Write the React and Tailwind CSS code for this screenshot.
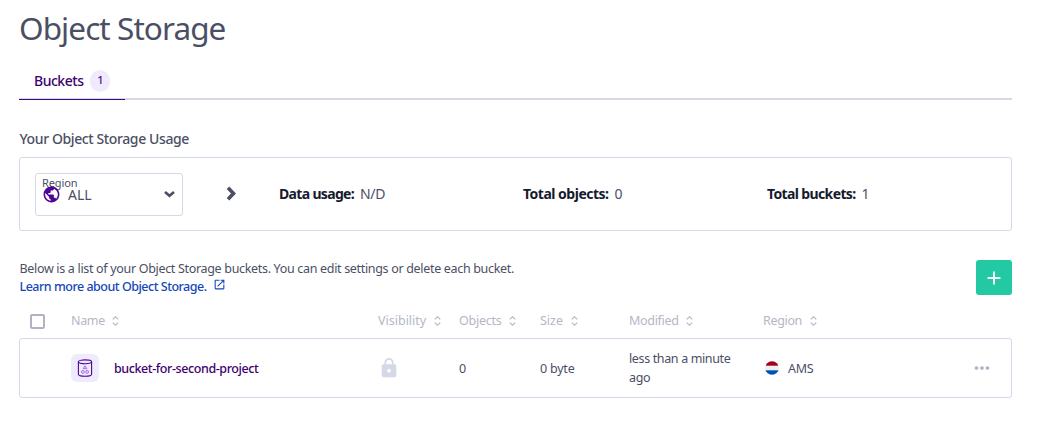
import React from "react";
import { MdAdd, MdLock, MdMoreHoriz, MdOpenInNew, MdPublic } from "react-icons/md";

const COLUMNS = "grid grid-cols-[52px_307px_81px_81px_89px_134px_1fr] items-center";

function SortIcon() {
  return (
    <svg width="7" height="10" viewBox="0 0 7 10" fill="none" stroke="currentColor" strokeWidth="1.1">
      <path d="M0.7 3.400 3.500 0.800 6.300 3.400M0.700 6.600 3.500 9.200 6.300 6.600" />
    </svg>
  );
}

function HeaderCell({ label, tracking }) {
  return (
    <div className="flex items-center gap-[7.5px]">
      <span className={tracking}>{label}</span>
      <SortIcon />
    </div>
  );
}

function Stat({ label, value, tracking }) {
  return (
    <div className="flex w-[244px] shrink-0 items-center gap-[6px] pb-0.5 text-[14px]">
      <span className={"font-bold text-[#151a2d] " + tracking}>{label}</span>
      <span className="tracking-[-0.300px]">{value}</span>
    </div>
  );
}

function BucketIcon() {
  return (
    <svg width="16" height="18" viewBox="0 0 16 18" fill="none">
      <g stroke="#4f0599" strokeWidth="1.1">
        <ellipse cx="8" cy="2.8" rx="6.6" ry="1.900" />
        <path d="M1.4 2.8v12.4c0 1.2 3 2 6.6 2s6.600-.8 6.600-2V2.800" />
      </g>
      <g stroke="#9a5ce6" strokeWidth="0.9">
        <path d="M8 6.800 9.800 9.700H6.200Z" />
        <circle cx="5.900" cy="12.900" r="1.400" />
        <circle cx="10.100" cy="12.900" r="1.400" />
      </g>
    </svg>
  );
}

function Flag() {
  return (
    <svg width="14" height="14" viewBox="0 0 14 14">
      <clipPath id="disc">
        <circle cx="7" cy="7" r="6.800" />
      </clipPath>
      <g clipPath="url(#disc)">
        <rect width="14" height="14" fill="#f0f0f0" />
        <rect width="14" height="4.700" fill="#a2001d" />
        <rect y="9.300" width="14" height="4.700" fill="#0052b4" />
      </g>
    </svg>
  );
}

export default function App() {
  return (
    <main className="h-[432px] w-[1052px] overflow-hidden bg-white pr-10 pl-[19px] font-['Noto_Sans',sans-serif] text-[12.5px] text-[#4b4f65]">
      <h1 className="pt-[8px] text-[31.5px] leading-[40px] tracking-[-0.930px]">Object Storage</h1>

      <nav className="mt-[14px] flex h-[38px] border-b-2 border-[#d4d8e7]">
        <div className="-mb-[2px] flex h-[38px] w-[106px] items-center gap-[7px] border-b border-[#40057f] pl-[15px]">
          <span className="text-[14px] font-medium tracking-[-0.480px] text-[#3d0071]">Buckets</span>
          <span className="flex h-[22px] w-5 items-center justify-center rounded-full bg-[#efebfd] text-[11px] font-medium text-[#4f0599]">
            1
          </span>
        </div>
      </nav>

      <h2 className="mt-[29px] pl-[0.5px] text-[14px] leading-5 font-medium tracking-[-0.390px]">Your Object Storage Usage</h2>

      <section className="mt-2 flex h-[74px] items-center rounded-[3px] border border-[#d4d8e7] pl-[15px]">
        <div className="flex h-[43px] w-[148px] shrink-0 flex-col rounded-[3px] border border-[#d4d8e7] pr-[7px] pl-[6px]">
          <span className="mt-[3px] h-[11px] text-[11px] leading-3 tracking-[-0.100px]">Region</span>
          <div className="flex h-[14px] items-center">
            <MdPublic className="shrink-0 text-[19px] text-[#4f0599]" />
            <span className="ml-[7px] text-[14px]">ALL</span>
            <svg className="ml-auto" width="11" height="7" viewBox="0 0 11 7" fill="none" stroke="currentColor" strokeWidth="2.600">
              <path d="M1 1 5.500 4.800 10 1" />
            </svg>
          </div>
        </div>
        <svg className="-mt-0.5 mr-[42px] ml-[43px] shrink-0" width="11" height="15" viewBox="0 0 11 15" fill="none" stroke="currentColor" strokeWidth="3.600">
          <path d="M2 1.700 7.500 7.500 2 13.300" />
        </svg>
        <Stat label="Data usage:" value="N/D" tracking="tracking-[-0.670px]" />
        <Stat label="Total objects:" value="0" tracking="tracking-[-0.500px]" />
        <Stat label="Total buckets:" value="1" tracking="tracking-[-0.630px]" />
      </section>

      <section className="mt-7 flex justify-between pl-[0.5px]">
        <div className="pt-px leading-[18px]">
          <p className="tracking-[-0.320px]">
            Below is a list of your Object Storage buckets. You can edit settings or delete each bucket.
          </p>
          <a className="flex font-medium text-[#1447b8]">
            <span className="tracking-[-0.490px]">Learn more about Object Storage.</span>
            <MdOpenInNew className="ml-[6px] text-[13px]" />
          </a>
        </div>
        <button className="mt-px flex h-[35px] w-9 items-center justify-center rounded-[3px] bg-[#23c9a3] text-white">
          <MdAdd className="text-[22px]" />
        </button>
      </section>

      <div className={COLUMNS + " mt-[13px] h-[24px] text-[#b4b7c6]"}>
        <span className="ml-[11px] size-[15px] rounded-[2px] border-2 border-[#b0b3c3]" />
        <HeaderCell label="Name" tracking="tracking-[-0.320px]" />
        <HeaderCell label="Visibility" tracking="tracking-normal" />
        <HeaderCell label="Objects" tracking="tracking-[-0.250px]" />
        <HeaderCell label="Size" tracking="tracking-normal" />
        <HeaderCell label="Modified" tracking="tracking-[-0.320px]" />
        <HeaderCell label="Region" tracking="tracking-[-0.340px]" />
      </div>

      <div className="mt-[5px] h-[60px] rounded-[3px] border border-[#d4d8e7]">
        <div className={COLUMNS + " -ml-px h-full"}>
          <span />
          <div className="flex items-center gap-[15px]">
            <span className="flex size-7 items-center justify-center rounded-md bg-[#efebfd]">
              <BucketIcon />
            </span>
            <span className="pt-0.5 font-medium tracking-[-0.410px] text-[#3d0071]">bucket-for-second-project</span>
          </div>
          <MdLock className="text-[22px] text-[#d4d8e7]" />
          <span className="pt-0.5">0</span>
          <span className="pt-0.5 tracking-[-0.210px]">0 byte</span>
          <span className="w-[110px] leading-[19px] tracking-[-0.360px]">less than a minute ago</span>
          <div className="flex items-center pr-[18px] pl-[2px]">
            <Flag />
            <span className="ml-[9px] pt-0.5 tracking-[-0.230px]">AMS</span>
            <MdMoreHoriz className="ml-auto text-[22px] text-[#b0b3c3]" />
          </div>
        </div>
      </div>
    </main>
  );
}
